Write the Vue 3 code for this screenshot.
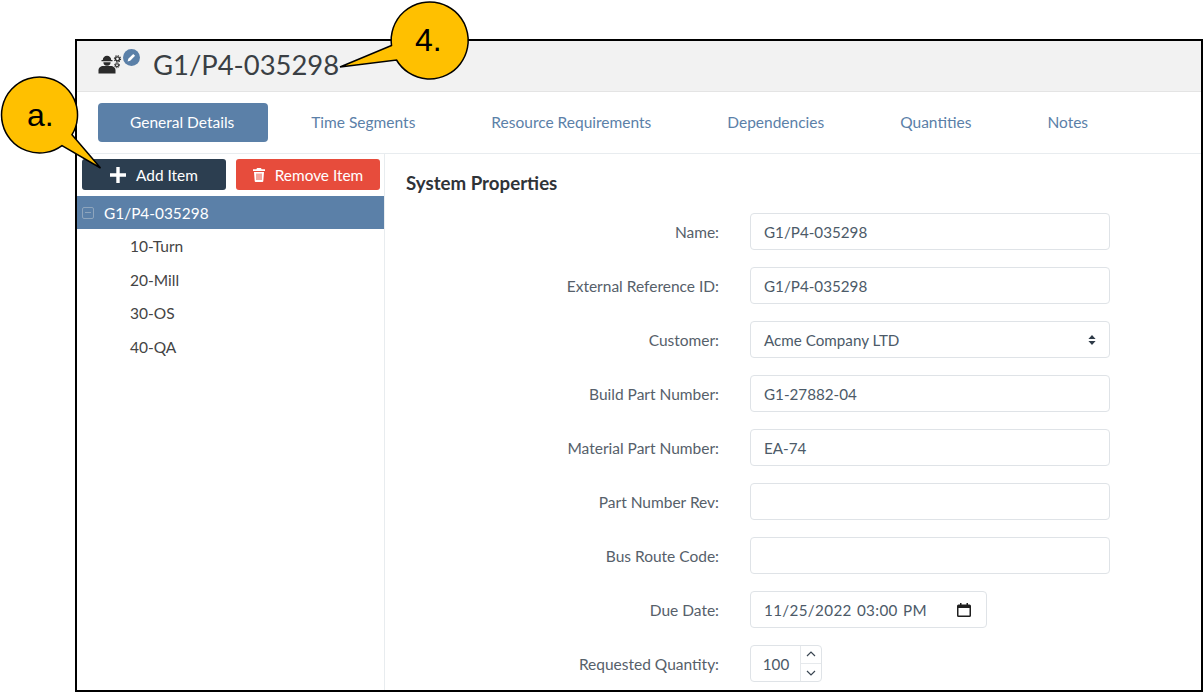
<template>
  <div class="page">
    <div class="window">
      <header class="window__head">
        <span class="head-icon">
          <svg class="head-icon__worker" width="24" height="20" viewBox="0 0 24 20" fill="#2b2b2b" aria-hidden="true">
            <path d="M4.800 5a4.200 4.200 0 0 1 8.400 0h1.300v1.300H3.500V5z" />
            <path d="M5.400 7.300h7.200a3.600 3.400 0 0 1-7.200 0z" />
            <path d="M.5 18.500v-3.300c0-2.500 2.300-4.200 4.600-4.200h7.800c2.300 0 4.600 1.700 4.600 4.200v3.300z" />
            <circle cx="19.500" cy="3.800" r="2" fill="none" stroke="#2b2b2b" stroke-width="1.300" />
            <circle cx="19.500" cy="3.800" r="3.100" fill="none" stroke="#2b2b2b" stroke-width="1.100" stroke-dasharray="1.300 1.100" />
            <circle cx="19" cy="10.200" r="1.500" fill="none" stroke="#2b2b2b" stroke-width="1.100" />
            <circle cx="19" cy="10.200" r="2.500" fill="none" stroke="#2b2b2b" stroke-width="1" stroke-dasharray="1.100 .9" />
          </svg>
          <svg class="head-icon__edit" width="17" height="17" viewBox="0 0 17 17" aria-hidden="true">
            <circle cx="8.500" cy="8.500" r="8.500" fill="#5b80a8" />
            <path d="M4.600 12.400l.7-2.600 4.900-4.900 1.900 1.900-4.900 4.900z" fill="#fff" />
          </svg>
        </span>
        <h1 class="window__title">G1/P4-035298</h1>
      </header>

      <nav class="tabs">
        <a
          v-for="(tab, i) in tabs"
          :key="tab"
          class="tab"
          :class="{ 'tab--active': i === 0 }"
        >{{ tab }}</a>
      </nav>

      <div class="window__body">
        <aside class="side">
          <div class="side__actions">
            <button class="btn btn--dark">
              <svg width="16" height="16" viewBox="0 0 16 16" aria-hidden="true">
                <path d="M6.300 0h3.400v6.300H16v3.400H9.700V16H6.300V9.700H0V6.300h6.300z" fill="#fff" />
              </svg>
              Add Item
            </button>
            <button class="btn btn--red">
              <svg width="12" height="14" viewBox="0 0 12 14" aria-hidden="true">
                <path fill="#fff" d="M4 0h4l.6 1.300H12v1.700H0V1.300h3.400zM1 4h10l-.7 9a1 1 0 0 1-1 1H2.700a1 1 0 0 1-1-1zm2.500 1.500v6.500h1V5.500zm2 0v6.500h1V5.500zm2 0v6.500h1V5.500z" />
              </svg>
              Remove Item
            </button>
          </div>
          <div class="tree__root">
            <span class="tree__toggle"></span>
            G1/P4-035298
          </div>
          <ul class="tree">
            <li v-for="item in items" :key="item">{{ item }}</li>
          </ul>
        </aside>

        <main class="form">
          <h2 class="form__title">System Properties</h2>

          <div class="field" v-for="f in textFields" :key="f.label">
            <label>{{ f.label }}</label>
            <div v-if="f.select" class="control control--select">
              {{ f.value }}
              <svg width="8" height="12" viewBox="0 0 8 12" aria-hidden="true">
                <path d="M4 1l3.600 4H.4zM4 11L.4 7h7.200z" fill="#2f3b48" />
              </svg>
            </div>
            <input v-else class="control" type="text" :value="f.value" readonly />
          </div>

          <div class="field">
            <label>Due Date:</label>
            <div class="control control--date">
              <span>11/25/2022 03:00 PM</span>
              <svg width="14" height="14" viewBox="0 0 14 14" aria-hidden="true">
                <path fill="#1f1f1f" d="M3 0h1.500v1.500h5V0H11v1.500h1.500A1.500 1.500 0 0 1 14 3v9.500a1.500 1.500 0 0 1-1.500 1.500h-11A1.500 1.500 0 0 1 0 12.500V3a1.500 1.500 0 0 1 1.500-1.500H3zM1.500 5v7.500h11V5z" />
              </svg>
            </div>
          </div>

          <div class="field">
            <label>Requested Quantity:</label>
            <div class="control control--number">
              <span class="number__val">100</span>
              <span class="number__spin">
                <span>
                  <svg width="10" height="6" viewBox="0 0 10 6" aria-hidden="true"><path d="M1 5l4-4 4 4" fill="none" stroke="#3a4652" stroke-width="1.200" /></svg>
                </span>
                <span>
                  <svg width="10" height="6" viewBox="0 0 10 6" aria-hidden="true"><path d="M1 1l4 4 4-4" fill="none" stroke="#3a4652" stroke-width="1.200" /></svg>
                </span>
              </span>
            </div>
          </div>
        </main>
      </div>
    </div>

    <!-- callouts -->
    <svg class="callouts" width="1203" height="692" viewBox="0 0 1203 692" aria-hidden="true">
      <path d="M391.500 45.500 L340 67 L396.500 60 A38.500 38.500 0 1 0 391.500 45.500 Z" fill="#ffc000" stroke="#000" stroke-width="1.500" />
      <path d="M72 134.700 L100.500 168 L62 145.600 A38 38 0 1 1 72 134.700 Z" fill="#ffc000" stroke="#000" stroke-width="1.500" />
    </svg>
    <span class="callout-text callout-text--four">4.</span>
    <span class="callout-text callout-text--a">a.</span>
  </div>
</template>

<script setup>
const tabs = [
  "General Details",
  "Time Segments",
  "Resource Requirements",
  "Dependencies",
  "Quantities",
  "Notes",
]

const items = ["10-Turn", "20-Mill", "30-OS", "40-QA"]

const textFields = [
  { label: "Name:", value: "G1/P4-035298" },
  { label: "External Reference ID:", value: "G1/P4-035298" },
  { label: "Customer:", value: "Acme Company LTD", select: true },
  { label: "Build Part Number:", value: "G1-27882-04" },
  { label: "Material Part Number:", value: "EA-74" },
  { label: "Part Number Rev:", value: "" },
  { label: "Bus Route Code:", value: "" },
]
</script>

<style>
html,
body {
  margin: 0;
  background: #fff;
  overflow: hidden;
}
</style>

<style scoped>
.page {
  position: relative;
  width: 1203px;
  height: 692px;
  padding: 38.500px 0.500px 0 75px;
  box-sizing: border-box;
  overflow: hidden;
  font-family: Lato, "Liberation Sans", sans-serif;
  background: #fff;
}

.window {
  height: 653.500px;
  box-sizing: border-box;
  border: 2px solid #000;
  background: #fff;
  overflow: hidden;
  display: flex;
  flex-direction: column;
}

.window__head {
  height: 51.500px;
  flex: none;
  box-sizing: border-box;
  display: flex;
  align-items: center;
  padding: 0 0 3px 21px;
  background: #f2f2f2;
  border-bottom: 1px solid #e4e4e4;
}

.head-icon {
  position: relative;
  width: 55px;
  height: 30px;
  flex: none;
}

.head-icon__worker {
  position: absolute;
  left: 0;
  top: 6px;
}

.head-icon__edit {
  position: absolute;
  left: 25px;
  top: 0;
}

.window__title {
  margin: 0;
  color: #3a3f44;
  font-size: 27.400px;
  font-weight: 400;
  line-height: 1;
}

.tabs {
  flex: none;
  height: 62px;
  box-sizing: border-box;
  display: flex;
  align-items: center;
  gap: 12px;
  padding: 0 0 0 21px;
  border-bottom: 1px solid #e8ecef;
}

.tab {
  display: block;
  padding: 0 32px;
  height: 39px;
  line-height: 39px;
  border-radius: 4px;
  color: #5b80a8;
  font-size: 15.500px;
  white-space: nowrap;
}

.tab--active {
  background: #5b80a8;
  color: #fff;
  padding-right: 34px;
  margin-right: -1px;
}

.window__body {
  flex: 1;
  display: flex;
  min-height: 0;
}

.side {
  width: 308px;
  flex: none;
  box-sizing: border-box;
  border-right: 1px solid #e8ecef;
}

.side__actions {
  display: flex;
  gap: 10px;
  padding: 5px 4px 6px 5px;
}

.btn {
  height: 31px;
  width: 144px;
  border: 0;
  border-radius: 3px;
  display: flex;
  align-items: center;
  justify-content: center;
  gap: 10px;
  color: #fff;
  font-family: inherit;
  font-size: 15.400px;
  padding: 0;
}

.btn--dark {
  background: #2c3e50;
}

.btn--red {
  background: #e74c3c;
}

.tree__root {
  height: 33px;
  width: 307px;
  display: flex;
  align-items: center;
  gap: 10px;
  box-sizing: border-box;
  padding-left: 5px;
  background: #5b80a8;
  color: #fff;
  font-size: 15.400px;
}

.tree__toggle {
  position: relative;
  width: 12px;
  height: 12px;
  box-sizing: border-box;
  border: 1px solid #8ea5bd;
  border-radius: 2px;
}

.tree__toggle::after {
  content: "";
  position: absolute;
  left: 2px;
  right: 2px;
  top: 4px;
  height: 1px;
  background: #8ea5bd;
}

.tree {
  list-style: none;
  margin: 0;
  padding: 1px 0 0 53px;
  color: #444;
  font-size: 15.500px;
}

.tree li {
  height: 33.600px;
  line-height: 33.600px;
}

.form {
  flex: 1;
  padding: 18px 0 0 21px;
  min-width: 0;
}

.form__title {
  margin: 0 0 18.800px;
  color: #2f3338;
  font-size: 18.700px;
  font-weight: 700;
  line-height: 22px;
}

.field {
  display: flex;
  align-items: center;
  gap: 31px;
  height: 37.500px;
  margin-bottom: 16.500px;
}

.field label {
  width: 313px;
  flex: none;
  text-align: right;
  color: #56606a;
  font-size: 15.500px;
}

.control {
  width: 360px;
  height: 37.500px;
  box-sizing: border-box;
  padding: 0 13px;
  border: 1px solid #dfe3e7;
  border-radius: 4px;
  background: #fff;
  color: #4c5a68;
  font-family: inherit;
  font-size: 15.200px;
  outline: none;
}

.control--select {
  display: flex;
  align-items: center;
  justify-content: space-between;
}

.control--date {
  width: 237px;
  display: flex;
  align-items: center;
  justify-content: space-between;
  padding-right: 15px;
  letter-spacing: 0.35px;
  word-spacing: 1px;
}

.control--number {
  width: 72px;
  padding: 0;
  display: flex;
  overflow: hidden;
}

.number__val {
  flex: 1;
  line-height: 36px;
  text-align: center;
  padding-left: 1px;
}

.number__spin {
  width: 20px;
  flex: none;
  display: flex;
  flex-direction: column;
  border-left: 1px solid #e6e9ec;
}

.number__spin span {
  flex: 1;
  display: flex;
  align-items: center;
  justify-content: center;
}

.number__spin span + span {
  border-top: 1px solid #e6e9ec;
}

.callouts {
  position: absolute;
  left: 0;
  top: 0;
  pointer-events: none;
}

.callout-text {
  position: absolute;
  font-family: "Liberation Sans", Arial, sans-serif;
  font-size: 32px;
  line-height: 36px;
  color: #000;
}

.callout-text--four {
  left: 415px;
  top: 22px;
}

.callout-text--a {
  left: 27px;
  top: 97px;
}
</style>
